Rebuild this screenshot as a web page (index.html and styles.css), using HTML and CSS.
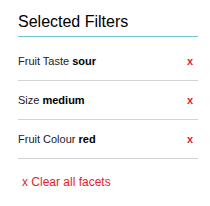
FILE: index.html
```html
<!DOCTYPE html>
<html>

<head>
  <meta name="viewport" content="width=device-width, initial-scale=1.0">
  <link rel="stylesheet" href="styles.css">
</head>

<body>
  <div class="filters">
    <h2 class="filters-title">Selected Filters</h2>

    <ul class="facet-list">
      <li class="facet">
        <span class="facet-label">Fruit Taste <b>sour</b></span>
        <a class="facet-remove" href="#">x</a>
      </li>
      <li class="facet">
        <span class="facet-label">Size <b>medium</b></span>
        <a class="facet-remove" href="#">x</a>
      </li>
      <li class="facet">
        <span class="facet-label">Fruit Colour <b>red</b></span>
        <a class="facet-remove" href="#">x</a>
      </li>
    </ul>

    <a class="clear-all" href="#">x Clear all facets</a>
  </div>
</body>
</html>
```

FILE: styles.css
```css
body {
  font-family: "Liberation Sans", Arial, sans-serif;
  margin: 0;
  background-color: #ffffff;
  color: #222222;
}

.filters {
  width: 180px;
  padding: 12px 12px 0 18px;
}

.filters-title {
  margin: 0 0 5px 0;
  padding-bottom: 4px;
  font-size: 16px;
  line-height: 20px;
  font-weight: normal;
  color: #000000;
  border-bottom: 1px solid #6cc5cf;
}

.facet-list {
  list-style: none;
  margin: 0;
  padding: 0;
}

.facet {
  display: flex;
  justify-content: space-between;
  align-items: center;
  padding: 13px 5px 12px 0;
  font-size: 11px;
  line-height: 13px;
  border-bottom: 1px solid #d3d3d3;
}

.facet-label b {
  color: #000000;
}

.facet-remove {
  color: #e8202a;
  text-decoration: none;
  font-size: 11px;
  font-weight: bold;
}

.clear-all {
  display: inline-block;
  margin: 16px 0 0 4px;
  font-size: 12px;
  line-height: 14px;
  color: #e8202a;
  text-decoration: none;
}
```
